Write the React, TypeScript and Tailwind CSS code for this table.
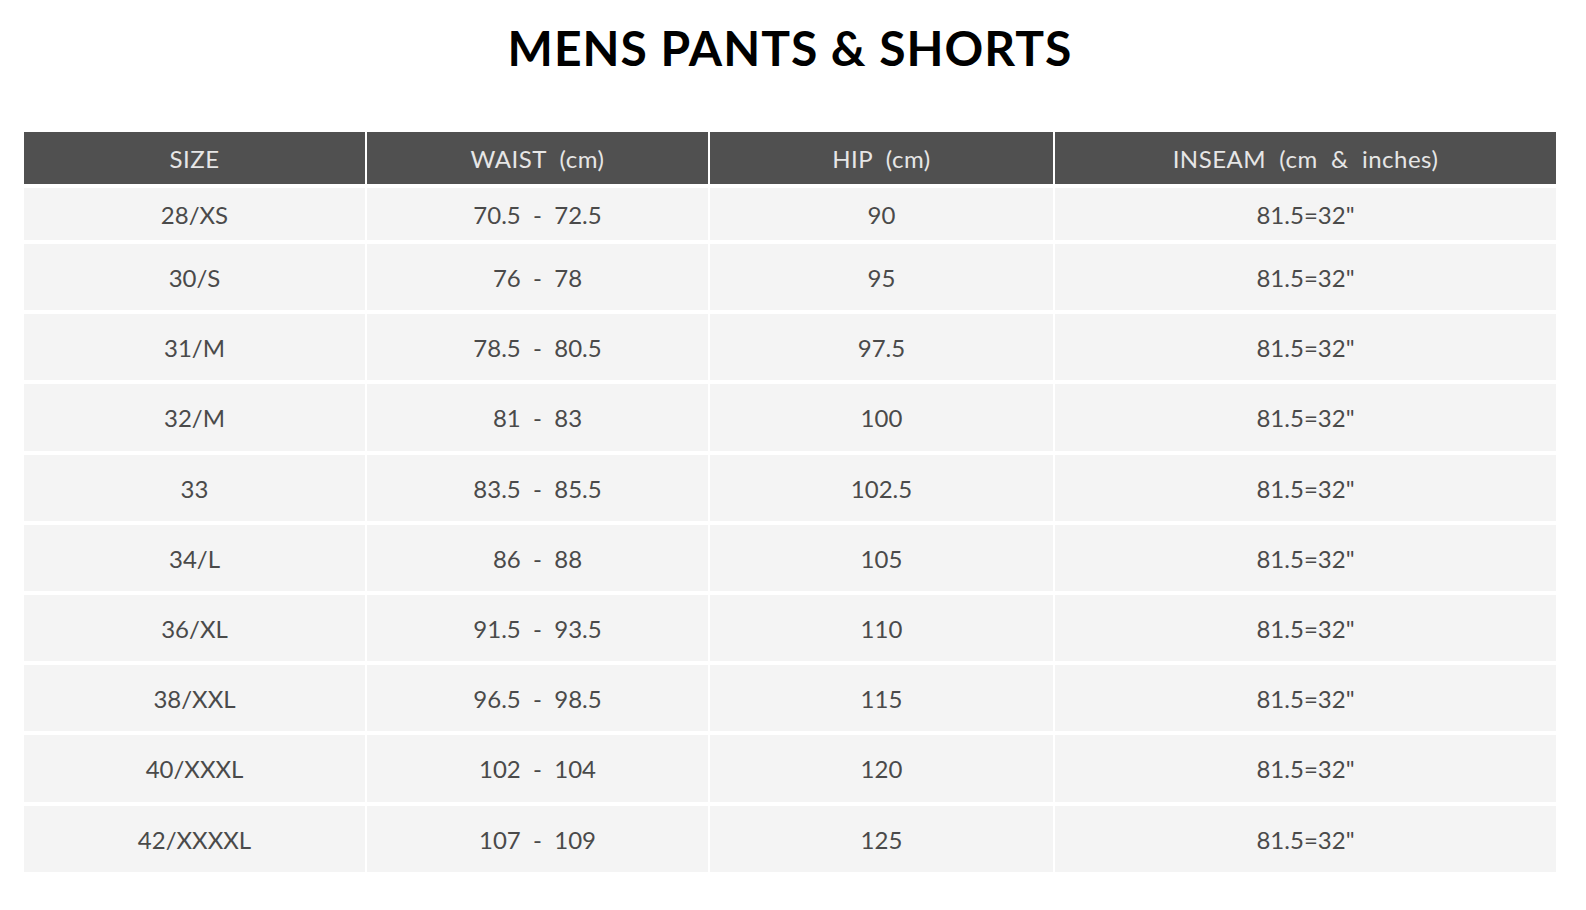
const HEAD = ['SIZE', 'WAIST  (cm)', 'HIP  (cm)', 'INSEAM  (cm  &  inches)'];

const ROWS = [
  ['28/XS', '70.5  -  72.5', '90'],
  ['30/S', '76  -  78', '95'],
  ['31/M', '78.5  -  80.5', '97.5'],
  ['32/M', '81  -  83', '100'],
  ['33', '83.5  -  85.5', '102.5'],
  ['34/L', '86  -  88', '105'],
  ['36/XL', '91.5  -  93.5', '110'],
  ['38/XXL', '96.5  -  98.5', '115'],
  ['40/XXXL', '102  -  104', '120'],
  ['42/XXXXL', '107  -  109', '125'],
];

export default function App() {
  return (
    <div className="min-h-screen bg-white pl-[24px] font-['Lato',_sans-serif]">
      <div className="w-[1532px]">
        {/* title */}
        <div className="h-[132px] pt-[24px] text-center">
          <h1 className="text-[48px] leading-none font-bold tracking-[1px] text-black">
            MENS PANTS &amp; SHORTS
          </h1>
        </div>

        {/* size table */}
        <div className="grid grid-cols-[341px_341px_343px_501px] gap-x-[2px] gap-y-[4px]">
          {HEAD.map((h) => (
            <div
              key={h}
              className="h-[52px] pt-[2px] flex items-center justify-center bg-[#505050] text-[24px] text-[#e6e6e6] tracking-[0.5px] whitespace-pre"
            >
              {h}
            </div>
          ))}

          {ROWS.map((r, i) =>
            [...r, '81.5=32"'].map((cell, j) => (
              <div
                key={`${i}-${j}`}
                className={`${i === 0 ? 'h-[52px]' : 'h-[66.2px]'} pt-[2px] flex items-center justify-center bg-[#f4f4f4] text-[24px] text-[#4a4a4a] whitespace-pre`}
              >
                {cell}
              </div>
            ))
          )}
        </div>
      </div>
    </div>
  );
}
